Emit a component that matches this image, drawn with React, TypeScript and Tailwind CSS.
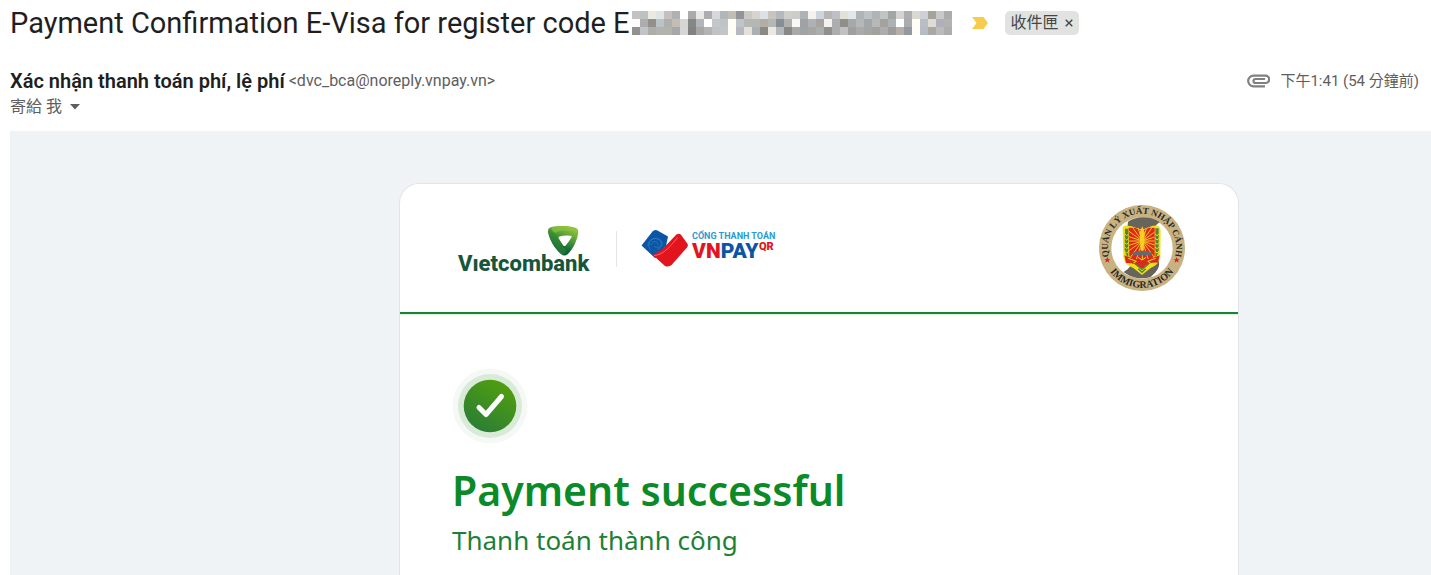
import React from "react";

const MASK_ROWS: string[] = [
  "c3c2c0 bcc2c2 ebe9e2 dfe4e7 c2c1bf aeb0b2 fefefe aaaaaa eae8e5 adadae d5d8dc b1b7b7 c2bdb4 92949a cac8c6 d7d4cf dbe1e5 c8c4be b4b9be cfceca cbcdca aeb3b3 f5f3ee ced6dc b8b6b4 bec0c4 e3e0da e2e7ea b1b4b4 bbc3c6 b1b4b4 bfc5c5 a3a6a5 d4d3d1 acaeb1 d9d8d1 ced1d3 a6a29c c9c9c9 acacac",
  "fbfbf9 adadad 91908c bcc3c7 afafad c3bdb4 d5d5d5 868686 b3b6b9 fefefe c5c7c6 c0c4c4 fffef6 c0c4c8 b5b7b5 b5b7b5 b2aea6 b5b7b4 888e93 b0b0ae f8f8f7 9ea2a3 afb2b4 a5a4a0 f4f2ee acadae 8f8e89 a6a8aa b5b8b7 a4a7a8 b6b9b9 a5a29d adb2b5 fcfdfe a9adae fefef6 b9bec5 dfdcd8 afb1b8 b2b2b2",
  "92918d c0c4c6 adadaa b2b2b2 b3b3ae a5a8aa d6d6d6 828282 a6a6a6 b3b3b3 bfc3c3 c2c6c6 fffef6 b5b9c0 e3e1d9 abb0b4 8b8986 ebe8e1 b4b8bb 878785 a9a9a7 a0a3a4 a6a6a3 aaaead 908f8d abadae c0c1c0 9e9f9f aaaaaa a5a5a5 a4a19d abadae 9c9c9c b4b0a8 9299a1 fefef6 b6bcc4 aaa8a5 bbbbbb adadad",
];

function MaskedCode() {
  return (
    <svg className="ml-0.5 h-6 w-80 shrink-0" viewBox="0 0 40 3" shapeRendering="crispEdges" aria-hidden="true">
      {MASK_ROWS.map((row, y) =>
        row.split(" ").map((c, x) => <rect key={`${x}-${y}`} x={x} y={y} width="1" height="1" fill={`#${c}`} />),
      )}
    </svg>
  );
}

function Vietcombank() {
  return (
    <svg className="h-12 w-[136px] shrink-0" viewBox="0 0 136 48" role="img" aria-label="Vietcombank">
      <defs>
        <linearGradient id="vcb" x1="0.9" y1="0" x2="0.4" y2="1">
          <stop offset="0" stopColor="#a6ce39" />
          <stop offset="0.45" stopColor="#4f9a3a" />
          <stop offset="0.75" stopColor="#12693c" />
          <stop offset="1" stopColor="#0b5a3a" />
        </linearGradient>
      </defs>
      <g transform="translate(1 0)">
        <path
          fillRule="evenodd"
          fill="url(#vcb)"
          d="M93 2.500C100 .6 112 .6 118.500 2.800Q121.600 4 121.200 8C120 16 116 24 111 29Q107.500 32 104 29C98 24 92.500 15 91 7.500Q90.600 3.800 93 2.500ZM102.500 11.500Q101 12 101.700 13.600L106.300 20.400Q107.500 21.600 108.700 20.400Q112.500 16 114.700 12Q115 10.800 113.500 10.700Q107 10.200 102.500 11.500Z"
        />
        <path d="M91.500 4C98 8 102 13 104.500 19C105.500 22 107 23.500 110 24L106 30.300C99 25 92 14 91.500 4Z" fill="#35882f" opacity=".55" />
        <path d="M94 2.700C102 .8 112 .8 118.500 3Q121 4 121 7.500C115 4.800 104 4.600 98 7.800Q95 6 94 2.700Z" fill="#8cc63f" opacity=".65" />
      </g>
      <text x="2" y="46" className="font-['Roboto',sans-serif] text-[22px] font-extrabold" fill="#14573c">
        Vıetcombank
      </text>
    </svg>
  );
}

function VnPay() {
  return (
    <svg className="h-10 w-[136px] shrink-0" viewBox="0 0 136 40" role="img" aria-label="Cổng thanh toán VNPAY QR">
      <path d="M.5 16.500L11.500 2.500Q13.500 .3 16 1.300L27 7.500L25 17L14 29Z" fill="#0b56a4" />
      <path d="M14 28L35.500 5.500Q38 3.800 40 5.800L46.300 14.500Q47.500 16.500 46 18.500L31 35.500Q28 38.500 24 37Z" fill="#e2141d" />
      <path d="M12 26L23 19Q29 17 34 7L36 5L14.500 29Z" fill="#e2141d" />
      <path d="M13 26.500C20 26 26 22 36.500 8.500" fill="none" stroke="#ff7b74" strokeWidth=".8" />
      <g fill="none" stroke="#4b9ad0" strokeWidth=".5" opacity=".8">
        <path d="M7 17C7 9 17 7 20 13C22 18 15 20 13 17" />
        <path d="M9.500 21C5 14 11 7 18 10C24 13 20 21 16 20" />
        <path d="M10 16C12 10 18 13 17 16" />
      </g>
      <text x="51" y="10" className="font-['Roboto',sans-serif] text-[9px] font-bold" fill="#2b9ad3">
        CỔNG THANH TOÁN
      </text>
      <text x="51" y="29" className="font-['Roboto',sans-serif] text-[21px] font-black">
        <tspan fill="#e2141d">VN</tspan>
        <tspan fill="#0b56a4">PAY</tspan>
      </text>
      <text x="118" y="21" className="font-['Roboto',sans-serif] text-[11px] font-black" fill="#e2141d">
        QR
      </text>
    </svg>
  );
}

function ImmigrationSeal() {
  const rays = Array.from({ length: 20 }, (_, i) => {
    const a = (i * 18 * Math.PI) / 180;
    return <path key={i} d={`M130 108L${130 + 62 * Math.cos(a)} ${108 + 62 * Math.sin(a)}`} />;
  });
  return (
    <svg className="size-[86px] shrink-0" viewBox="0 0 258 258" role="img" aria-label="Quản lý xuất nhập cảnh – Immigration">
      <defs>
        <path id="sealTop" d="M28.100 146.800A102.500 102.500 0 1 1 229.900 146.800" />
        <path id="sealBottom" d="M14 160A119 119 0 0 0 244 160" />
        <clipPath id="sealRed">
          <path d="M89 68H167V154L129 180L91 154Z" />
        </clipPath>
      </defs>
      <circle cx="129" cy="129" r="129" fill="#c8b282" />
      <circle cx="129" cy="129" r="92" fill="#fff" />
      <path d="M87 50C110 34 148 31 182 51C167 63 158 72 155 95L178 165C186 185 174 199 155 216C130 224 98 220 74 201C92 191 101 178 101 151L88 90Q84 66 87 50Z" fill="#67645b" />
      <path d="M71 70Q74 60 86 62L98 64L129 74L161 62L173 62Q184 64 185 77L184 155Q180 179 155 189L139 202L129 210L119 202L103 189Q78 180 73 158Z" fill="#f0df19" />
      <path d="M78 71H88V157Q78 149 77 134ZM169 70H179V137Q177 151 169 157Z" fill="#55833a" />
      <g fill="none" stroke="#f0df19" strokeWidth="3">
        <path d="M76 86l7 6 7-6M76 99l7 6 7-6M76 112l7 6 7-6M76 125l7 6 7-6M76 138l7 6 7-6" />
        <path d="M167 86l7 6 7-6M167 99l7 6 7-6M167 112l7 6 7-6M167 125l7 6 7-6M167 138l7 6 7-6" />
      </g>
      <path d="M89 68L108 68L129 77L150 68H167V154L129 180L91 154Z" fill="#dd281c" />
      <g clipPath="url(#sealRed)" stroke="#f1c51d" strokeWidth="3">
        {rays}
      </g>
      <path d="M130 64L137 82L134 137H125L122 82Z" fill="#f6cf22" />
      <path d="M76 151Q129 176 182 151L177 173Q148 171 133 189H124Q106 172 81 174Z" fill="#d82b1d" />
      <path d="M99 144Q129 130 161 144L157 151H102Z" fill="#626a70" />
      <path d="M88 160L112 169L103 174M170 160L146 169L155 174M117 157L129 165L141 157" fill="none" stroke="#f0df19" strokeWidth="3" />
      <path d="M109 177L129 193L149 177M118 191L129 202L140 191" fill="none" stroke="#57813b" strokeWidth="4" />
      <g className="font-['Liberation_Serif',serif] font-bold" fill="#292925" textAnchor="middle">
        <text className="text-[27px]">
          <textPath href="#sealTop" startOffset="50%">
            QUẢN LÝ XUẤT NHẬP CẢNH
          </textPath>
        </text>
        <text className="text-[30px]">
          <textPath href="#sealBottom" startOffset="50%">
            IMMIGRATION
          </textPath>
        </text>
      </g>
      <g fill="#d61f26">
        <path id="sealStar" d="M25 156L28 162.500H34L29 166.500L31.500 173L25 169L18.500 173L21 166.500L16 162.500H22Z" />
        <use href="#sealStar" x="208" />
      </g>
    </svg>
  );
}

function SuccessIcon() {
  return (
    <svg className="size-[76px]" viewBox="0 0 76 76" aria-hidden="true">
      <defs>
        <linearGradient id="okFill" x1=".8" y1="0" x2=".2" y2="1">
          <stop offset="0" stopColor="#53a00c" />
          <stop offset="1" stopColor="#287c38" />
        </linearGradient>
      </defs>
      <circle cx="38" cy="38" r="37.500" fill="#f5f9f5" />
      <circle cx="38" cy="38" r="32" fill="#d9ead9" />
      <circle cx="38" cy="38" r="26.300" fill="url(#okFill)" />
      <path d="M27 39.500L34 46.500L49.500 28.500" fill="none" stroke="#fff" strokeWidth="5" strokeLinecap="round" strokeLinejoin="round" />
    </svg>
  );
}

export default function App() {
  return (
    <div className="flex min-h-screen flex-col bg-white pl-2.5 font-['Roboto','Noto_Sans_CJK_TC',sans-serif] text-[#5e5e5e]">
      <header className="pt-[7px]">
        <div className="flex h-8 items-center">
          <h1 className="text-[29px] leading-8 whitespace-nowrap text-[#1f1f1f]">
            Payment Confirmation E-Visa for register code E
          </h1>
          <MaskedCode />
          <svg className="ml-5 h-3 w-4 shrink-0" viewBox="0 0 16 12" role="img" aria-label="重要">
            <path d="M0 0H11.500L16 6L11.500 12H0L4.500 6Z" fill="#f7cb4d" />
          </svg>
          <div className="ml-[17px] flex h-6 shrink-0 items-center gap-1.5 rounded-[5px] bg-[#e1e3e1] px-1.5 text-base text-[#444746]">
            <span>收件匣</span>
            <button type="button" aria-label="移除標籤「收件匣」" className="flex size-2 items-center justify-center">
              <svg className="size-2" viewBox="0 0 8 8" aria-hidden="true">
                <path d="M.7 .7L7.300 7.300M7.300 .7L.7 7.300" stroke="#444746" strokeWidth="1.400" />
              </svg>
            </button>
          </div>
        </div>

        <div className="mt-7 flex items-start justify-between pr-3">
          <div>
            <div className="flex h-7 items-center gap-1 whitespace-nowrap">
              <span className="text-[20px] font-semibold text-[#1f1f1f]">Xác nhận thanh toán phí, lệ phí</span>
              <span className="text-base">&lt;dvc_bca@noreply.vnpay.vn&gt;</span>
            </div>
            <div className="flex h-6 items-center gap-2 text-base">
              <span>寄給 我</span>
              <button type="button" aria-label="顯示詳細資料" className="flex">
                <svg className="h-1.5 w-2.5" viewBox="0 0 10 6" aria-hidden="true">
                  <path d="M0 0H10L5 5.500Z" fill="#5e5e5e" />
                </svg>
              </button>
            </div>
          </div>
          <div className="flex h-7 items-center gap-2.5 text-[15px] whitespace-nowrap">
            <svg className="h-3.5 w-[23px]" viewBox="0 0 23 14" aria-label="附件" role="img">
              <path
                d="M18 12.300H6.500A5.300 5.300 0 0 1 6.500 1.700H18.500A3.600 3.600 0 0 1 18.500 9H8.500A2 2 0 0 1 8.500 5H18"
                fill="none"
                stroke="#808080"
                strokeWidth="2.200"
              />
            </svg>
            <time>下午1:41 (54 分鐘前)</time>
          </div>
        </div>
      </header>

      <main className="mt-3 grid flex-1 grid-cols-[minmax(0,389fr)_minmax(0,840px)_minmax(0,192fr)] bg-[#eff3f6] pt-13">
        <article className="col-start-2 rounded-t-[20px] border border-b-0 border-[#e1e5e8] bg-white">
          <div className="flex h-[130px] items-center justify-between border-b-2 border-[#1e8035] pr-[53px] pl-14">
            <div className="flex items-center pt-0.5">
              <Vietcombank />
              <div className="ml-6 h-9 w-px bg-[#e3e6e8]" />
              <div className="ml-6">
                <VnPay />
              </div>
            </div>
            <ImmigrationSeal />
          </div>
          <div className="border-t border-[#dcf5e1] px-[52px] pt-[53px] font-['Noto_Sans',sans-serif] text-[#0c8a28]">
            <SuccessIcon />
            <h2 className="mt-4 text-[41px] leading-[60px] font-semibold whitespace-nowrap">Payment successful</h2>
            <p className="mt-0.5 text-[26px] leading-9 text-[#1e8035]">Thanh toán thành công</p>
          </div>
        </article>
      </main>
    </div>
  );
}
